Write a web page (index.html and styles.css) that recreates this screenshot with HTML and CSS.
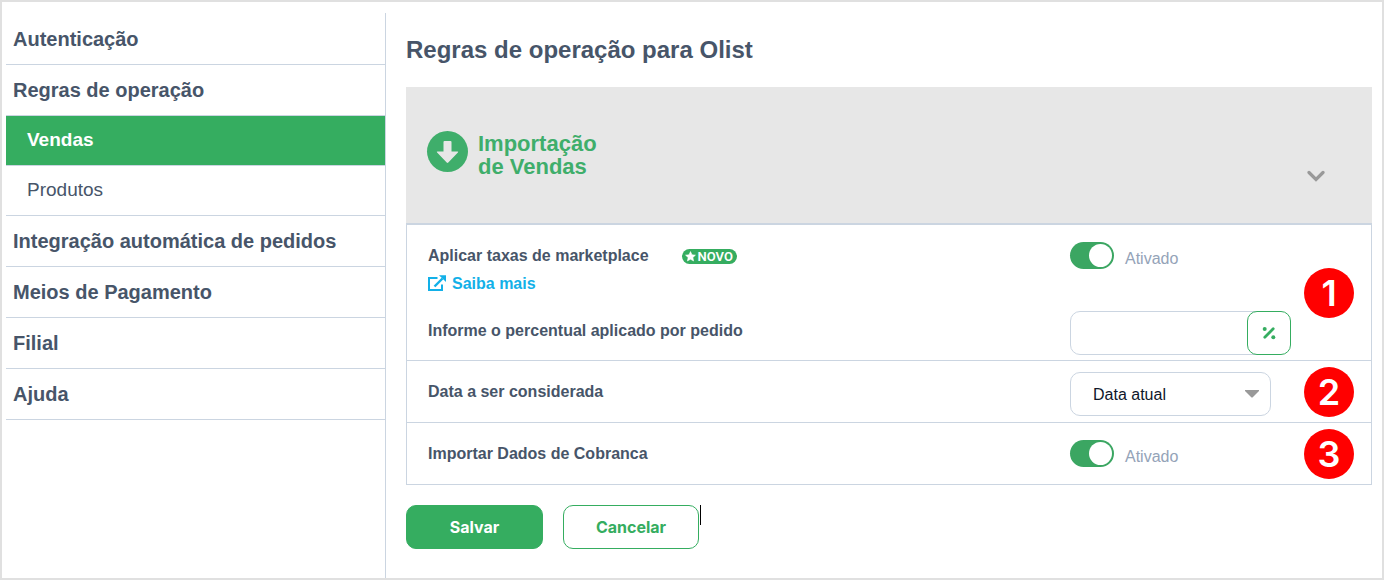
FILE: index.html
```html
<!DOCTYPE html>
<html lang="pt-BR">
<head>
<meta charset="utf-8">
<title>Regras de operação para Olist</title>
<link rel="stylesheet" href="styles.css">
</head>
<body>
<div class="page">
  <nav class="sidebar" aria-label="Configurações">
    <a class="menu-item" href="#">Autenticação</a>
    <a class="menu-item" href="#">Regras de operação</a>
    <a class="menu-sub active" href="#" aria-current="page">Vendas</a>
    <a class="menu-sub" href="#">Produtos</a>
    <a class="menu-item" href="#">Integração automática de pedidos</a>
    <a class="menu-item" href="#">Meios de Pagamento</a>
    <a class="menu-item" href="#">Filial</a>
    <a class="menu-item" href="#">Ajuda</a>
  </nav>

  <main class="content">
    <h1 class="title">Regras de operação para Olist</h1>

    <section class="panel">
      <header class="panel-head">
        <svg class="panel-icon" viewBox="0 0 42 42" aria-hidden="true">
          <circle cx="21.500" cy="21.500" r="20.500" fill="#3fae6b"/>
          <path d="M18.500 11h6q1 0 1 1V21.500h6q1.300 0 .4 1L22.300 32.500q-.8.800-1.600 0L11.100 22.500q-.9-1 .4-1h6v-9.500q0-1 1-1z" fill="#e7e7e7"/>
        </svg>
        <h2 class="panel-title">Importação<br>de Vendas</h2>
        <button class="collapse" type="button" aria-label="Recolher">
          <svg viewBox="0 0 18 12" width="18" height="12" aria-hidden="true"><path d="M2 2.500l7 7 7-7" fill="none" stroke="#999" stroke-width="3.200" stroke-linecap="round"/></svg>
        </button>
      </header>

      <div class="row">
        <div class="fields">
          <div class="label-group">
            <div class="label-line">
              <label class="label" for="taxas">Aplicar taxas de marketplace</label>
              <span class="tag">
                <svg viewBox="0 0 12 12" width="11" height="11" aria-hidden="true"><path d="M6 .6l1.600 3.500 3.800.4-2.800 2.600.8 3.800L6 9l-3.400 1.900.8-3.800L.6 4.500l3.800-.4z" fill="#fff" stroke="#fff" stroke-width=".6" stroke-linejoin="round"/></svg>
                NOVO
              </span>
            </div>
            <a class="more" href="#">
              <svg viewBox="0 0 18 18" width="18" height="18" aria-hidden="true"><path d="M9.500 3H1v12h13V9.500" fill="none" stroke="#12b0e8" stroke-width="2"/><path d="M6.500 11.500L14.500 3.500" fill="none" stroke="#12b0e8" stroke-width="2.400"/><path d="M11 .3h7v6.600z" fill="#12b0e8"/></svg>
              Saiba mais
            </a>
          </div>
          <div class="control switch-line">
            <input class="switch" type="checkbox" id="taxas" checked>
            <span class="state">Ativado</span>
          </div>
          <label class="label percent-label" for="percentual">Informe o percentual aplicado por pedido</label>
          <div class="control percent">
            <input class="text-input" type="text" id="percentual">
            <button class="unit" type="button" aria-label="Percentual">
              <svg viewBox="0 0 14 14" width="14" height="14" aria-hidden="true"><path d="M2.800 11.200l8.400-8.400" stroke="#35ad60" stroke-width="2.800" stroke-linecap="round"/><circle cx="2.700" cy="2.900" r="2" fill="#35ad60"/><circle cx="11.300" cy="11.200" r="2" fill="#35ad60"/></svg>
            </button>
          </div>
        </div>
        <span class="step">1</span>
      </div>

      <div class="row">
        <div class="fields">
          <label class="label" for="data">Data a ser considerada</label>
          <div class="control select-box">
            <select class="select" id="data"><option>Data atual</option></select>
            <svg class="arrow" viewBox="0 0 14 8" aria-hidden="true"><path d="M0 0h14v1L7.500 7.500h-1L0 1z" fill="#999"/></svg>
          </div>
        </div>
        <span class="step">2</span>
      </div>

      <div class="row">
        <div class="fields">
          <label class="label" for="cobranca">Importar Dados de Cobranca</label>
          <div class="control switch-line">
            <input class="switch" type="checkbox" id="cobranca" checked>
            <span class="state">Ativado</span>
          </div>
        </div>
        <span class="step">3</span>
      </div>
    </section>

    <div class="actions">
      <button class="btn primary" type="button">Salvar</button>
      <button class="btn outline" type="button">Cancelar</button>
      <span class="caret"></span>
    </div>
  </main>
</div>
</body>
</html>
```

FILE: styles.css
```css
*{box-sizing:border-box}
body{margin:0;background:#fff;color:#475569;font-family:"Liberation Sans",Arial,sans-serif;font-size:16px}
h1,h2{margin:0}
svg{display:block;flex:none}
.page{display:flex;min-height:100vh;border:2px solid #e0e0e0;padding:11px 10px 0 4px}

.sidebar{flex:0 0 380px;padding-top:1px;border-right:1px solid #cbd5e1}
.menu-item,.menu-sub{display:flex;align-items:center;border-bottom:1px solid #cbd5e1;color:#475569;text-decoration:none}
.menu-item{height:51px;padding:0 7px;font-size:20px;font-weight:700}
.menu-sub{height:50px;padding:0 21px 2px;font-size:19px}
.menu-sub.active{background:#35ad60;color:#fff;font-weight:700}

.content{flex:1;min-width:0;padding-left:20px}
.title{padding:23px 0 23px;font-size:24px;line-height:28px}

.panel-head{display:flex;align-items:flex-start;padding:43px 47px 0 20px;min-height:138px;background:#e7e7e7;border-bottom:2px solid #cbd5e1}
.panel-icon{width:42px;height:42px}
.panel-title{margin-left:10px;padding-top:2px;color:#3fae6b;font-size:22px;line-height:23px}
.collapse{margin:40px 0 0 auto;padding:0;border:0;background:none}

.row{display:flex;align-items:center;padding:0 17px 0 21px;border:1px solid #cbd5e1;border-top:0;min-height:62px}
.fields{flex:1;display:grid;grid-template-columns:1fr 234px;align-items:center}
.label{font-weight:700;line-height:20px}
.label-group{padding:21px 0 14px}
.label-line{display:flex;align-items:center;gap:33px}
.tag{display:flex;align-items:center;gap:2px;height:15px;padding:0 4px 0 3px;border-radius:8px;background:#35ad60;color:#fff;font:600 13px/15px Roboto,sans-serif}
.more{display:inline-flex;align-items:center;gap:6px;margin-top:8px;color:#12b0e8;font-weight:700;line-height:20px;text-decoration:none}
.switch-line{display:flex;align-items:center;gap:11px}
.label-group + .switch-line{align-self:start;padding-top:17px}
.switch{appearance:none;display:flex;justify-content:flex-end;align-items:center;width:44px;height:27px;margin:0;padding:2px;border-radius:14px;background:#3ba662}
.switch::before{content:"";width:23px;height:23px;border-radius:50%;background:#fff}
.state{padding-top:7px;color:#94a3b8;line-height:20px}
.percent-label{padding-bottom:10px}
.percent{display:flex;padding-bottom:5px}
.text-input{width:201px;height:44px;padding:0 12px;border:1px solid #cbd5e1;border-radius:10px;font:inherit}
.unit{display:flex;align-items:center;justify-content:center;width:44px;height:44px;margin-left:-24px;padding:0;border:1px solid #35ad60;border-radius:10px;background:#fff}
.select-box{position:relative;width:201px;padding-top:5px}
.select{display:block;appearance:none;width:100%;height:44px;padding:0 22px;border:1px solid #cbd5e1;border-radius:10px;background:#fff;color:#0f172a;font:inherit}
.arrow{position:absolute;top:23px;right:12px;width:14px;height:8px;pointer-events:none}
.step{display:flex;align-items:center;justify-content:center;width:50px;height:50px;border-radius:50%;background:#f00;color:#fff;font:600 36px/50px Inter,sans-serif}

.actions{display:flex;padding:20px 0}
.btn{height:44px;border:1px solid #35ad60;border-radius:10px;font:700 16px Inter,sans-serif}
.primary{width:137px;background:#35ad60;color:#fff}
.outline{width:136px;margin-left:20px;background:#fff;color:#35ad60}
.caret{width:1px;height:20px;margin-left:1px;background:#000}
```
